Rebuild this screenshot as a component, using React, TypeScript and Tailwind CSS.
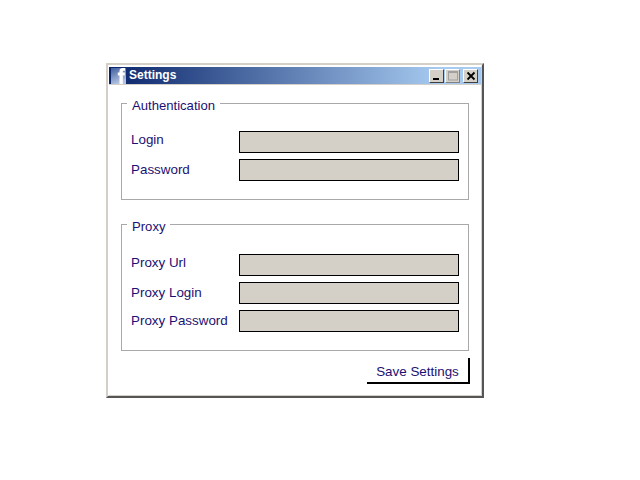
import React from 'react';

const textClass = 'text-[13.4px] leading-[16px] text-[#1c1073]';

function Row({ label, className, labelClass }: { label: string; className?: string; labelClass: string }) {
  return (
    <div className={`flex items-start ${className ?? ''}`}>
      <label className={`w-[108px] ${textClass} ${labelClass}`}>{label}</label>
      <input
        type="text"
        className="h-[22px] w-[220px] border border-black bg-[#d4d0c8] outline-none"
      />
    </div>
  );
}

function Group({ title, children, className }: { title: string; children: React.ReactNode; className?: string }) {
  return (
    <fieldset className={`w-[348px] border border-[#a8a8a8] pl-[9px] ${className ?? ''}`}>
      <legend className="ml-[-4px] px-[5px] pt-[6px] text-[13.1px] leading-[16px] text-[#1c1073]">{title}</legend>
      {children}
    </fieldset>
  );
}

function CaptionButton({ children, className }: { children: React.ReactNode; className?: string }) {
  return (
    <div
      className={`flex h-[14px] w-[15px] items-center justify-center border border-t-white border-l-white border-r-[#404040] border-b-[#404040] bg-[#d4d0c8] ${className ?? ''}`}
    >
      {children}
    </div>
  );
}

export default function App() {
  return (
    <div className="h-[480px] w-[640px] overflow-hidden bg-white pl-[106px] pt-[63px] font-['Liberation_Sans',Arial,sans-serif]">
      <div className="h-[335px] w-[378px] border-[2px] border-t-[#d4d0c8] border-l-[#d4d0c8] border-r-[#555555] border-b-[#555555] bg-white">
        <div className="h-full border border-t-[2px] border-t-white border-l-white border-r-[#d4d0c8] border-b-[#d4d0c8]">
          <div className="flex h-[17px] items-center justify-between bg-[linear-gradient(to_right,#0a246a,#a6caf0_89%)] pr-[3px]">
            <div className="flex items-center">
              <svg width="18" height="17" viewBox="0 0 18 17">
                <defs>
                  <linearGradient id="fbicon" x1="0" y1="0" x2="0.4" y2="1">
                    <stop offset="0" stopColor="#3f5e9f" />
                    <stop offset="1" stopColor="#b4c4e2" />
                  </linearGradient>
                </defs>
                <rect x="2" y="1" width="15" height="16" fill="url(#fbicon)" />
                <path d="M10.5 17V8.5H8.8V5.5H10.5V4C10.5 2 11.8 1 13.6 1h2.4v2.8h-1.2c-.7 0-1 .3-1 .9v.8h2.2l-.4 3h-1.8V17z" fill="#fff" />
              </svg>
              <span className="ml-[2px] pb-[1px] text-[12px] font-bold leading-[14px] text-white">Settings</span>
            </div>
            <div className="flex">
              <CaptionButton>
                <svg width="10" height="10" viewBox="0 0 10 10">
                  <rect x="1" y="7" width="6" height="2" fill="#000" />
                </svg>
              </CaptionButton>
              <CaptionButton className="ml-[1px] border-r-[#808080] border-b-[#808080]">
                <svg width="10" height="10" viewBox="0 0 10 10">
                  <rect x="0.5" y="0.5" width="9" height="8.5" fill="none" stroke="#a0a0a0" />
                  <rect x="0" y="0" width="10" height="2" fill="#a0a0a0" />
                </svg>
              </CaptionButton>
              <CaptionButton className="ml-[3px]">
                <svg width="10" height="10" viewBox="0 0 10 10">
                  <path d="M1.5 1.5L8.5 8.5M8.5 1.5L1.5 8.5" stroke="#000" strokeWidth="1.8" fill="none" />
                </svg>
              </CaptionButton>
            </div>
          </div>
          <div className="border-t border-t-[#d4d0c8] pl-[12px] pt-[7px]">
            <Group title="Authentication" className="h-[108px]">
              <Row label="Login" labelClass="pt-[1px]" className="mt-[17px]" />
              <Row label="Password" labelClass="pt-[3px]" className="mt-[6px]" />
            </Group>
            <Group title="Proxy" className="mt-[13px] h-[138px]">
              <Row label="Proxy Url" labelClass="pt-[1px]" className="mt-[19px]" />
              <Row label="Proxy Login" labelClass="pt-[3px]" className="mt-[6px]" />
              <Row label="Proxy Password" labelClass="pt-[3px]" className="mt-[6px]" />
            </Group>
            <div className="mt-[7px] flex w-[349px] justify-end">
              <button className={`h-[26px] w-[103px] border-[2px] border-t-0 border-l-0 border-r-black border-b-black bg-white pt-[4px] ${textClass}`}>
                Save Settings
              </button>
            </div>
          </div>
        </div>
      </div>
    </div>
  );
}
